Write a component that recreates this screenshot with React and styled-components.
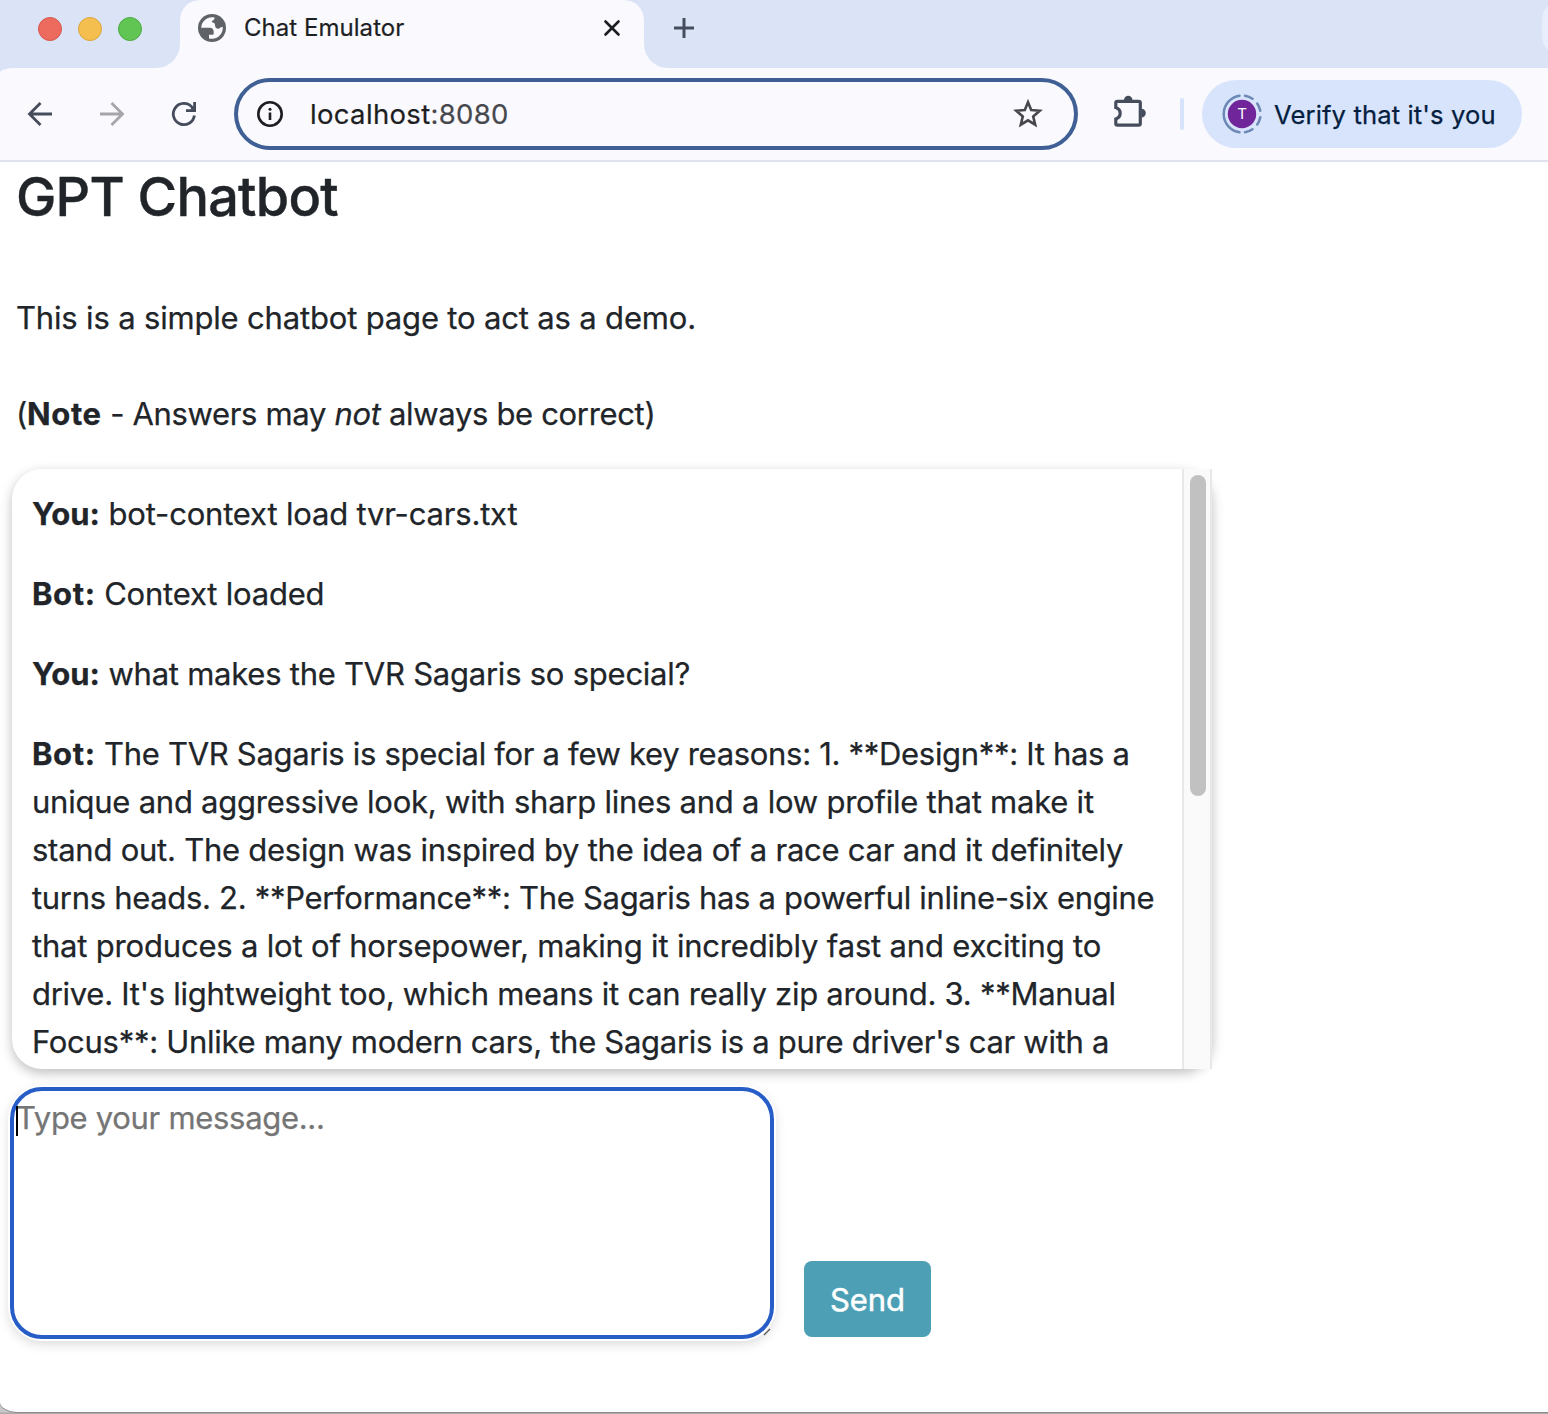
import React from "react";
import styled, { createGlobalStyle } from "styled-components";

const Global = createGlobalStyle`
  *, *::before, *::after { box-sizing: border-box; }
  body {
    margin: 0;
    background: #b8b8b8;
    font-family: Inter, "Liberation Sans", sans-serif;
    color: #212529;
  }
`;

const Desktop = styled.div`
  height: 1414px;
  overflow: hidden;
  background: linear-gradient(#c8c8c8, #c8c8c8 1412px, #ababab 1413px);
`;

const Window = styled.div`
  display: flex;
  flex-direction: column;
  height: 1412px;
  background: #fff;
  border-bottom-left-radius: 18px 10px;
  box-shadow: 0 1px 0 #8c8c8c;
`;

/* Tab strip */
const Strip = styled.div`
  display: flex;
  height: 68px;
  flex: none;
  background: #f9f9fe;
`;

const WindowControls = styled.div`
  display: flex;
  align-items: center;
  gap: 16px;
  width: 180px;
  padding: 0 0 10px 38px;
  background: #dbe3f6;
  border-bottom-right-radius: 24px;
`;

const Light = styled.span`
  width: 24px;
  height: 24px;
  border-radius: 50%;
  background: ${(p) => p.$fill};
  border: 1px solid ${(p) => p.$edge};
`;

const TabSlot = styled.div`
  width: 464px;
  background: linear-gradient(#dbe3f6 34px, #f9f9fe 34px);
`;

const Tab = styled.div`
  display: flex;
  align-items: center;
  height: 100%;
  padding: 0 22px 12px 18px;
  background: #f9f9fe;
  border-radius: 20px 20px 0 0;
`;

const TabTitle = styled.span`
  flex: 1;
  margin-left: 18px;
  font-size: 24px;
  line-height: 32px;
  letter-spacing: 0.04px;
  color: #1d1f24;
  -webkit-text-stroke: 0.2px currentColor;
`;

const StripRest = styled.div`
  display: flex;
  flex: 1;
  justify-content: space-between;
  align-items: flex-start;
  overflow: hidden;
  padding-left: 28px;
  background: #dbe3f6;
  border-bottom-left-radius: 24px;
`;

const NewTab = styled.span`
  display: flex;
  padding-top: 16px;
`;

const EdgeButton = styled.span`
  width: 60px;
  height: 56px;
  margin-right: -54px;
  border-radius: 20px;
  background: #e9eefc;
`;

/* Toolbar */
const ToolbarWrap = styled.div`
  flex: none;
  background: #dbe3f6;
`;

const Toolbar = styled.div`
  display: flex;
  align-items: center;
  height: 94px;
  padding: 0 26px 0 4px;
  background: #f9f9fe;
  border-bottom: 2px solid #dfe2ee;
  border-top-left-radius: 14px 5px;
`;

const NavButton = styled.span`
  display: flex;
  justify-content: center;
  width: 72px;
`;

const Omnibox = styled.div`
  display: flex;
  align-items: center;
  width: 844px;
  height: 72px;
  margin-left: 14px;
  padding: 0 30px 0 18px;
  border: 4px solid #3f5f95;
  border-radius: 36px;
`;

const Address = styled.span`
  flex: 1;
  margin-left: 26px;
  font-size: 27.5px;
  line-height: 36px;
  letter-spacing: 0.33px;
  color: #1d1e22;
  -webkit-text-stroke: 0.2px currentColor;
`;

const Port = styled.span`
  color: #47484d;
`;

const Extensions = styled.span`
  display: flex;
  margin: 0 0 2px 30px;
`;

const Divider = styled.span`
  width: 4px;
  height: 32px;
  margin: 0 18px 0 28px;
  border-radius: 2px;
  background: #d8e4fc;
`;

const ProfileChip = styled.div`
  display: flex;
  align-items: center;
  width: 320px;
  height: 68px;
  padding-left: 18px;
  border-radius: 34px;
  background: #d8e4fc;
  color: #041e3f;
  font-size: 25.6px;
  letter-spacing: 0.12px;
  white-space: nowrap;
  -webkit-text-stroke: 0.25px currentColor;
`;

const ChipLabel = styled.span`
  margin: 1px 0 0 10px;
`;

/* Page */
const Page = styled.main`
  display: flex;
  flex-direction: column;
  align-items: flex-start;
  padding-left: 12px;
`;

const Heading = styled.h1`
  margin: 1px 0 63px 4px;
  font-size: 54px;
  font-weight: 500;
  line-height: 68px;
  letter-spacing: -0.76px;
  -webkit-text-stroke: 0.4px currentColor;
`;

const Paragraph = styled.p`
  margin: 0 0 ${(p) => p.$after}px 4px;
  font-size: 31px;
  line-height: 48px;
  letter-spacing: ${(p) => p.$track}px;
  white-space: nowrap;
  -webkit-text-stroke: 0.25px currentColor;
`;

const ChatBox = styled.section`
  display: flex;
  width: 1200px;
  height: 600px;
  border-radius: 30px;
  background: #fff;
  box-shadow: 0 4px 12px rgba(0, 0, 0, 0.26);
`;

const Messages = styled.div`
  flex: 1;
  overflow: hidden;
  padding: 21px 0 0 20px;
`;

const Message = styled.div`
  margin-bottom: 32px;
  font-size: 31px;
  line-height: 48px;
  -webkit-text-stroke: 0.25px currentColor;
`;

const Line = styled.span`
  display: block;
  white-space: nowrap;
  letter-spacing: ${(p) => p.$track}px;
`;

const Speaker = styled.b`
  font-weight: 700;
  letter-spacing: ${(p) => p.$track}px;
`;

const ScrollTrack = styled.div`
  width: 30px;
  padding: 6px 4px 0 6px;
  background: #fafafa;
  border: solid #e8e8e8;
  border-width: 0 2px;
`;

const ScrollThumb = styled.div`
  width: 16px;
  height: 321px;
  border-radius: 8px;
  background: #c1c1c1;
`;

const Composer = styled.form`
  display: flex;
  align-items: flex-end;
  margin: 18px 0 0 -2px;
`;

const Input = styled.div`
  position: relative;
  width: 764px;
  height: 252px;
  padding: 3px 2px;
  border: 4px solid #265dc7;
  border-radius: 32px;
  background: #fff;
  color: #757575;
  font-size: 31px;
  line-height: 48px;
  letter-spacing: -0.3px;
  -webkit-text-stroke: 0.25px currentColor;
  box-shadow: 0 0 0 2px #fff, 0 4px 12px 1px rgba(0, 0, 0, 0.15);
`;

const Caret = styled.span`
  position: absolute;
  left: 2px;
  top: 15px;
  width: 2px;
  height: 30px;
  background: #000;
`;

const ResizeGrip = styled.svg`
  position: absolute;
  right: -1px;
  bottom: -1px;
`;

const SendButton = styled.button`
  width: 127px;
  height: 76px;
  margin: 0 0 2px 30px;
  padding: 2px 0 0;
  border: 0;
  border-radius: 8px;
  background: #4c9fb5;
  color: #fff;
  font: 400 31px/48px Inter, "Liberation Sans", sans-serif;
  letter-spacing: -0.1px;
  -webkit-text-stroke: 0.5px currentColor;
`;

const GlobeIcon = () => (
  <svg width="28" height="28" viewBox="0 0 28 28">
    <circle cx="14" cy="14" r="14" fill="#5f6368" />
    <path
      fill="#f9f9fe"
      d="M3.200 13.700A10.800 10.800 0 0 1 16.600 3.500C16.600 5.200 15.800 6.200 14.300 6.700C13.600 7 13.600 8.200 14.600 8.600C16.200 9 17 9.600 17 11C17 13.200 18.300 14.700 20.200 14.700C21.700 14.700 22.300 13.200 24.700 12.800A10.800 10.800 0 0 1 11 24.400V20.800H14.200C15.200 20.800 15.700 20.200 15.700 19.200V17.800C15.700 15.500 14.300 13.700 12 13.700Z"
    />
  </svg>
);

const CloseIcon = () => (
  <svg width="20" height="20" viewBox="0 0 20 20" stroke="#1c1d21" strokeWidth="2.6" strokeLinecap="round">
    <path d="M3.500 3.500L16.500 16.500M16.500 3.500L3.500 16.500" />
  </svg>
);

const PlusIcon = () => (
  <svg width="24" height="24" viewBox="0 0 24 24" stroke="#454c5c" strokeWidth="3">
    <path d="M12 2V22M2 12H22" />
  </svg>
);

const ArrowIcon = ({ color, flip }) => (
  <svg width="26" height="26" viewBox="0 0 26 26" fill="none" stroke={color} strokeWidth="2.800">
    <path d={flip ? "M1 13H23.500M12.500 2L23.500 13L12.500 24" : "M25 13H2.500M13.500 2L2.500 13L13.500 24"} />
  </svg>
);

const ReloadIcon = () => (
  <svg width="28" height="28" viewBox="0 0 28 28">
    <path d="M24.400 15.500A10.600 10.600 0 1 1 22 7.200L24.500 9.800" fill="none" stroke="#454c5c" strokeWidth="2.800" />
    <path d="M26 2V12H16V9.200H20.500L23.200 6.500V2Z" fill="#454c5c" />
  </svg>
);

const InfoIcon = () => (
  <svg width="28" height="28" viewBox="0 0 28 28">
    <circle cx="14" cy="14" r="11.700" fill="none" stroke="#1d1e22" strokeWidth="2.600" />
    <circle cx="14" cy="9.200" r="1.500" fill="#1d1e22" />
    <path d="M14 12.500V20" stroke="#1d1e22" strokeWidth="2.600" />
  </svg>
);

const StarIcon = () => (
  <svg width="32" height="32" viewBox="0 0 32 32" fill="none" stroke="#47484d" strokeWidth="2.600">
    <path d="M16 4.200L19.200 12.100L27.700 12.800L21.200 18.400L23.200 26.700L16 22.300L8.800 26.700L10.800 18.400L4.300 12.800L12.800 12.100Z" />
  </svg>
);

const PuzzleIcon = () => (
  <svg width="44" height="44" viewBox="0 0 44 44">
    <path
      d="M9.500 10.300H30.500Q32.300 10.300 32.300 12V32.500Q32.300 34.200 30.500 34.200H9.500Q7.800 34.200 7.800 32.500V28C13.600 26 13.600 18.500 7.800 16.500V12Q7.800 10.300 9.500 10.300Z"
      fill="none"
      stroke="#454c5c"
      strokeWidth="3.200"
    />
    <path d="M16 9A4.200 4.200 0 0 1 24.400 9ZM33.500 17.800A4.300 4.300 0 0 1 33.500 26.400Z" fill="#454c5c" />
  </svg>
);

const Avatar = () => (
  <svg width="44" height="44" viewBox="0 0 44 44">
    <g fill="none" stroke="#6c88b4" strokeWidth="2.500" strokeLinecap="round">
      <path d="M19.500 3.700A18.500 18.500 0 0 0 19.500 40.300" />
      <path d="M25 3.700A18.500 18.500 0 0 1 32.500 6.800M37.200 11.600A18.500 18.500 0 0 1 40.300 18.800M40.300 25.200A18.500 18.500 0 0 1 37.200 32.400M32.500 37.200A18.500 18.500 0 0 1 25 40.300" />
    </g>
    <circle cx="22" cy="22" r="14.200" fill="#70259a" />
    <text x="22" y="27.400" textAnchor="middle" fontSize="15" fill="#fff" stroke="none" letterSpacing="0">
      T
    </text>
  </svg>
);

const conversation = [
  { speaker: "You:", lines: [["bot-context load tvr-cars.txt", -0.18]] },
  { speaker: "Bot:", lines: [["Context loaded", -0.2]] },
  { speaker: "You:", lines: [["what makes the TVR Sagaris so special?", -0.24]] },
  {
    speaker: "Bot:",
    lines: [
      ["The TVR Sagaris is special for a few key reasons: 1. **Design**: It has a", -0.307],
      ["unique and aggressive look, with sharp lines and a low profile that make it", -0.233],
      ["stand out. The design was inspired by the idea of a race car and it definitely", -0.242],
      ["turns heads. 2. **Performance**: The Sagaris has a powerful inline-six engine", -0.31],
      ["that produces a lot of horsepower, making it incredibly fast and exciting to", -0.187],
      ["drive. It's lightweight too, which means it can really zip around. 3. **Manual", -0.272],
      ["Focus**: Unlike many modern cars, the Sagaris is a pure driver's car with a", -0.285],
    ],
  },
];

export default function App() {
  return (
    <Desktop>
      <Global />
      <Window>
        <Strip>
          <WindowControls>
            <Light $fill="#ec6a5e" $edge="#d6574c" />
            <Light $fill="#f4bf4f" $edge="#dba63c" />
            <Light $fill="#61c554" $edge="#4daa41" />
          </WindowControls>
          <TabSlot>
            <Tab>
              <GlobeIcon />
              <TabTitle>Chat Emulator</TabTitle>
              <CloseIcon />
            </Tab>
          </TabSlot>
          <StripRest>
            <NewTab>
              <PlusIcon />
            </NewTab>
            <EdgeButton />
          </StripRest>
        </Strip>
        <ToolbarWrap>
          <Toolbar>
            <NavButton>
              <ArrowIcon color="#454c5c" />
            </NavButton>
            <NavButton>
              <ArrowIcon color="#a6a6aa" flip />
            </NavButton>
            <NavButton>
              <ReloadIcon />
            </NavButton>
            <Omnibox>
              <InfoIcon />
              <Address>
                localhost<Port>:8080</Port>
              </Address>
              <StarIcon />
            </Omnibox>
            <Extensions>
              <PuzzleIcon />
            </Extensions>
            <Divider />
            <ProfileChip>
              <Avatar />
              <ChipLabel>Verify that it's you</ChipLabel>
            </ProfileChip>
          </Toolbar>
        </ToolbarWrap>
        <Page>
          <Heading>GPT Chatbot</Heading>
          <Paragraph $after={48} $track={-0.17}>
            This is a simple chatbot page to act as a demo.
          </Paragraph>
          <Paragraph $after={31} $track={-0.33}>
            (<Speaker $track={0.65}>Note</Speaker> - Answers may <i>not</i> always be correct)
          </Paragraph>
          <ChatBox>
            <Messages>
              {conversation.map((message, m) => (
                <Message key={m}>
                  {message.lines.map(([text, track], l) => (
                    <Line key={l} $track={track}>
                      {l === 0 && (
                        <>
                          <Speaker $track={message.speaker === "Bot:" ? 0.6 : 0}>{message.speaker}</Speaker>{" "}
                        </>
                      )}
                      {text}
                    </Line>
                  ))}
                </Message>
              ))}
            </Messages>
            <ScrollTrack>
              <ScrollThumb />
            </ScrollTrack>
          </ChatBox>
          <Composer>
            <Input>
              Type your message...
              <Caret />
              <ResizeGrip width="8" height="8" viewBox="0 0 8 8">
                <path d="M1 7L7 1" stroke="#555" strokeWidth="1.200" />
              </ResizeGrip>
            </Input>
            <SendButton type="button">Send</SendButton>
          </Composer>
        </Page>
      </Window>
    </Desktop>
  );
}
